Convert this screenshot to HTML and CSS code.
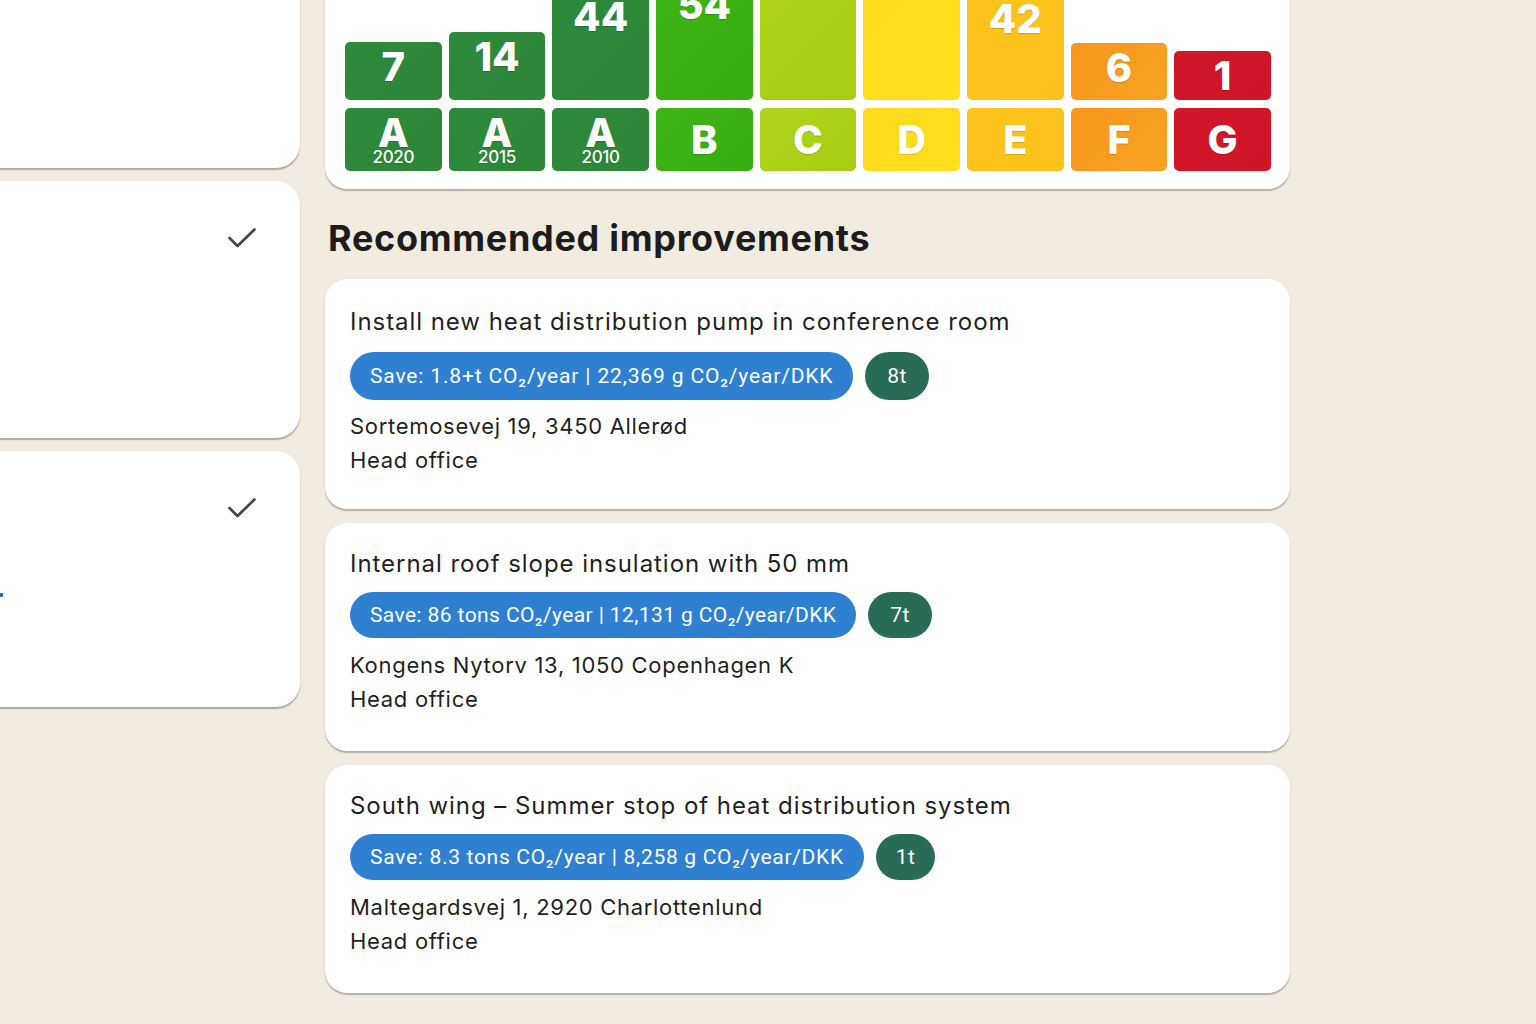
FILE: index.html
```html
<!DOCTYPE html>
<html lang="en">
<head>
<meta charset="utf-8">
<title>Energy labels</title>
<link rel="stylesheet" href="styles.css">
</head>
<body>
<div class="page">
  <aside class="side">
    <div class="side-card side-card--first"></div>
    <div class="side-card">
      <svg class="check" viewBox="0 0 28 20" width="28" height="20"><polyline points="1.5,10 9.5,18 26.5,1.5" fill="none" stroke="#444" stroke-width="2.6" stroke-linecap="round" stroke-linejoin="round"/></svg>
    </div>
    <div class="side-card side-card--last">
      <svg class="check" viewBox="0 0 28 20" width="28" height="20"><polyline points="1.5,10 9.5,18 26.5,1.5" fill="none" stroke="#444" stroke-width="2.6" stroke-linecap="round" stroke-linejoin="round"/></svg>
      <span class="side-mark"></span>
    </div>
  </aside>

  <main class="main">
    <section class="chart-card">
      <div class="bars">
        <div class="col"><div class="bar c-a" style="height:58px"><span>7</span></div></div>
        <div class="col"><div class="bar c-a" style="height:68px"><span>14</span></div></div>
        <div class="col"><div class="bar c-a" style="height:108px"><span>44</span></div></div>
        <div class="col"><div class="bar c-b" style="height:120px"><span>54</span></div></div>
        <div class="col"><div class="bar c-c" style="height:190px"></div></div>
        <div class="col"><div class="bar c-d" style="height:170px"></div></div>
        <div class="col"><div class="bar c-e" style="height:106px"><span>42</span></div></div>
        <div class="col"><div class="bar c-f" style="height:57px"><span>6</span></div></div>
        <div class="col"><div class="bar c-g" style="height:49px"><span>1</span></div></div>
      </div>
      <div class="labels">
        <div class="tile c-a"><span class="letter">A</span><span class="year">2020</span></div>
        <div class="tile c-a"><span class="letter">A</span><span class="year">2015</span></div>
        <div class="tile c-a"><span class="letter">A</span><span class="year">2010</span></div>
        <div class="tile c-b"><span class="letter">B</span></div>
        <div class="tile c-c"><span class="letter">C</span></div>
        <div class="tile c-d"><span class="letter">D</span></div>
        <div class="tile c-e"><span class="letter">E</span></div>
        <div class="tile c-f"><span class="letter">F</span></div>
        <div class="tile c-g"><span class="letter">G</span></div>
      </div>
    </section>

    <h2 class="section-title">Recommended improvements</h2>

    <article class="rec rec--first">
      <h3 class="rec-title">Install new heat distribution pump in conference room</h3>
      <div class="chips">
        <span class="save">Save: 1.8+t CO₂/year | 22,369 g CO₂/year/DKK</span>
        <span class="tons">8t</span>
      </div>
      <p class="rec-line">Sortemosevej 19, 3450 Allerød</p>
      <p class="rec-line">Head office</p>
    </article>

    <article class="rec">
      <h3 class="rec-title">Internal roof slope insulation with 50 mm</h3>
      <div class="chips">
        <span class="save save--tight">Save: 86 tons CO₂/year | 12,131 g CO₂/year/DKK</span>
        <span class="tons">7t</span>
      </div>
      <p class="rec-line">Kongens Nytorv 13, 1050 Copenhagen K</p>
      <p class="rec-line">Head office</p>
    </article>

    <article class="rec">
      <h3 class="rec-title">South wing – Summer stop of heat distribution system</h3>
      <div class="chips">
        <span class="save save--mid">Save: 8.3 tons CO₂/year | 8,258 g CO₂/year/DKK</span>
        <span class="tons tons--narrow">1t</span>
      </div>
      <p class="rec-line">Maltegardsvej 1, 2920 Charlottenlund</p>
      <p class="rec-line">Head office</p>
    </article>
  </main>
</div>
</body>
</html>
```

FILE: styles.css
```css
html, body {
  margin: 0;
  padding: 0;
}
body {
  background: #f2ece0;
  font-family: "Inter", "Noto Sans", sans-serif;
  color: #1e1e1e;
  overflow: hidden;
  height: 1024px;
}
.page {
  display: flex;
  align-items: flex-start;
  gap: 25px;
  margin-top: -160px;
}

/* left column */
.side {
  width: 340px;
  margin-left: -40px;
  display: flex;
  flex-direction: column;
  gap: 13px;
  flex: none;
}
.side-card {
  background: #fff;
  border-radius: 24px;
  height: 257px;
  box-shadow: 0 2px 1px rgba(70, 60, 50, 0.35), 0 1px 4px rgba(0, 0, 0, 0.06);
  display: flex;
  justify-content: flex-end;
  align-items: flex-start;
  padding: 47px 44px 0 0;
  box-sizing: border-box;
  position: relative;
}
.side-card--first {
  height: 328px;
}
.side-card--last {
  height: 256px;
}
.check {
  display: block;
}
.side-mark {
  position: absolute;
  left: 40px;
  top: 142px;
  width: 3px;
  height: 4px;
  background: #2a5ea8;
  border-radius: 1px;
}

/* main column */
.main {
  width: 965px;
  flex: none;
  display: flex;
  flex-direction: column;
}
.chart-card {
  background: #fff;
  border-radius: 22px;
  padding: 20px 19px 18px 20px;
  box-shadow: 0 2px 1px rgba(70, 60, 50, 0.3), 0 1px 4px rgba(0, 0, 0, 0.06);
  display: flex;
  flex-direction: column;
  gap: 8px;
}
.bars {
  height: 240px;
  display: grid;
  grid-template-columns: repeat(9, 1fr);
  column-gap: 7px;
  align-items: end;
}
.col {
  display: flex;
  flex-direction: column;
  justify-content: flex-end;
  height: 100%;
}
.bar {
  border-radius: 5px;
  display: flex;
  justify-content: center;
  align-items: flex-start;
  padding-top: 5px;
  box-sizing: border-box;
}
.bar span {
  color: #fff;
  font-weight: 800;
  font-size: 40px;
  line-height: 40px;
  text-shadow: 0 1px 1px rgba(0, 0, 0, 0.18);
}
.labels {
  display: grid;
  grid-template-columns: repeat(9, 1fr);
  column-gap: 7px;
  height: 63px;
}
.tile {
  border-radius: 5px;
  display: flex;
  flex-direction: column;
  align-items: center;
  justify-content: center;
  color: #fff;
  text-shadow: 0 1px 1px rgba(0, 0, 0, 0.15);
}
.letter {
  font-weight: 800;
  font-size: 40px;
  line-height: 32px;
  margin-top: 4px;
}
.year {
  font-weight: 500;
  font-size: 17px;
  line-height: 17px;
  letter-spacing: -0.3px;
}
.tile .letter:only-child {
  line-height: 40px;
  margin-top: 0;
}

.c-a { background: linear-gradient(135deg, #2c8a3b, #2f8638); }
.c-b { background: linear-gradient(135deg, #3fb515, #36ad10); }
.c-c { background: linear-gradient(135deg, #b0d41c, #a6cc14); }
.c-d { background: linear-gradient(135deg, #fcd91c, #fee01c); }
.c-e { background: linear-gradient(135deg, #fbc41a, #fcc21c); }
.c-f { background: linear-gradient(135deg, #f7961c, #f8a223); }
.c-g { background: linear-gradient(135deg, #d3172b, #cf1528); }

.section-title {
  font-size: 36px;
  font-weight: 700;
  margin: 26px 0 0 3px;
  line-height: 46px;
  color: #1c1c1e;
  letter-spacing: 0.7px;
}

.rec {
  background: #fff;
  border-radius: 22px;
  margin-top: 14px;
  padding: 26px 25px 35px 25px;
  box-shadow: 0 2px 1px rgba(70, 60, 50, 0.3), 0 1px 4px rgba(0, 0, 0, 0.06);
}
.rec--first {
  margin-top: 18px;
  padding-top: 28px;
  padding-bottom: 32px;
}
.rec-title {
  margin: 0;
  font-size: 24px;
  font-weight: 400;
  line-height: 30px;
  color: #1f1f1f;
  letter-spacing: 0.95px;
}
.chips {
  display: flex;
  gap: 12px;
  margin: 13px 0 10px;
}
.rec--first .chips {
  margin: 15px 0 9px;
}
.save,
.tons {
  color: #fff;
  font-family: "Roboto", "Inter", sans-serif;
  font-size: 21px;
  line-height: 46px;
  height: 46px;
  border-radius: 24px;
  white-space: nowrap;
}
.rec--first .save,
.rec--first .tons {
  line-height: 48px;
  height: 48px;
}
.save {
  background: #2f80d1;
  padding: 0 20px;
  letter-spacing: 0.85px;
}
.save--tight {
  letter-spacing: 0.4px;
}
.save--mid {
  letter-spacing: 0.7px;
}
.tons {
  background: #286c58;
  padding: 0 22px;
  letter-spacing: 0.3px;
}
.tons--narrow {
  padding: 0 20px;
}
.rec-line {
  margin: 0;
  font-size: 22px;
  line-height: 34px;
  color: #1f1f1f;
  letter-spacing: 0.7px;
}
```
